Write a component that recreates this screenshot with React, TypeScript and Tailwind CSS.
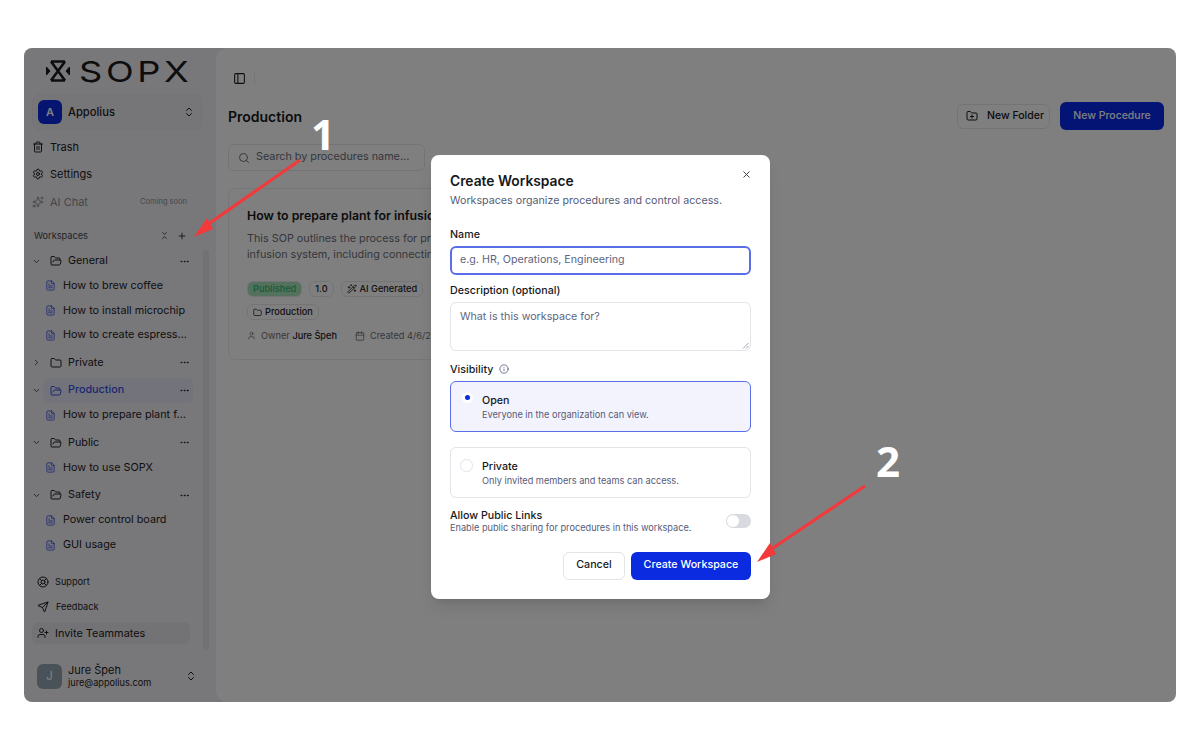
import {
  Calendar,
  ChevronDown,
  ChevronRight,
  ChevronsDownUp,
  ChevronsUpDown,
  Ellipsis,
  FileText,
  Folder,
  FolderOpen,
  FolderPlus,
  Info,
  LifeBuoy,
  PanelLeft,
  Plus,
  Search,
  Send,
  Settings,
  Sparkles,
  Trash2,
  User,
  UserPlus,
  WandSparkles,
  X,
} from "lucide-react";

const tree = [
  { name: "General", open: true, docs: ["How to brew coffee", "How to install microchip", "How to create espress..."] },
  { name: "Private", open: false, docs: [] },
  { name: "Production", open: true, active: true, docs: ["How to prepare plant f..."] },
  { name: "Public", open: true, docs: ["How to use SOPX"] },
  { name: "Safety", open: true, docs: ["Power control board", "GUI usage"] },
];

function Logo() {
  return (
    <div className="flex h-[46px] items-center gap-[9px] pl-[14px]">
      <svg width="24" height="22" viewBox="0 0 24 22" fill="none" stroke="#1b1b1d" strokeWidth="2.6" className="shrink-0">
        <path d="M5 1.5h14M5 20.5h14M5 1.5l14 19M19 1.5l-14 19" />
        <path d="M0.5 7l3.5 4-3.5 4zM23.5 7l-3.5 4 3.5 4z" fill="#1b1b1d" strokeWidth="1" />
      </svg>
      <span className="origin-left scale-x-[1.25] text-[29px] leading-none font-normal tracking-[0.1em] text-[#1b1b1d]">SOPX</span>
    </div>
  );
}

function Sidebar() {
  return (
    <aside className="flex w-[192px] shrink-0 flex-col pl-[8px] text-[#1f2024]">
      <Logo />
      <button className="flex h-[36px] w-[170px] items-center rounded-lg border border-[#e8e8ee] bg-[#ececf1] pr-[6px] pl-[5px]">
        <span className="flex h-[24px] w-[24px] items-center justify-center rounded-md bg-[#0a2be0] text-[11px] font-semibold text-white">A</span>
        <span className="ml-[6px] text-[11.2px] font-medium">Appolius</span>
        <ChevronsUpDown size={12} className="ml-auto" />
      </button>
      <nav className="mt-[3px] flex flex-col text-[11px]">
        <a className="flex h-[27.5px] items-center gap-[6px]"><Trash2 size={12} /> Trash</a>
        <a className="flex h-[27.5px] items-center gap-[6px]"><Settings size={12} /> Settings</a>
        <a className="flex h-[27.5px] items-center gap-[6px] text-[#8b8d96]">
          <Sparkles size={12} /> AI Chat
          <span className="mr-[29px] ml-auto text-[7.5px]">Coming soon</span>
        </a>
      </nav>
      <div className="mt-[10px] flex h-[20px] items-center pr-[29px] pl-[2px] text-[9.2px] text-[#44454c]">
        <span>Workspaces</span>
        <ChevronsDownUp size={9} className="mr-[8px] ml-auto text-[#1f2024]" />
        <Plus size={10} className="text-[#1f2024]" />
      </div>
      <div className="relative mt-[3px] flex w-[176px] flex-col gap-[2.6px] text-[10.8px]">
        {tree.map((f) => (
          <div key={f.name} className="flex flex-col">
            <div className="flex h-[25px] items-center">
              <span className="flex w-[9px] justify-center">
                {f.open ? <ChevronDown size={9} /> : <ChevronRight size={9} />}
              </span>
              <div className={`ml-[2px] flex h-[25px] w-[150px] items-center rounded-md pl-[7px] ${f.active ? "bg-[#e4e7f6] font-medium text-[#3a50e0]" : ""}`}>
                {f.open ? <FolderOpen size={12} /> : <Folder size={12} />}
                <span className="ml-[6px]">{f.name}</span>
                <Ellipsis size={11} className="mr-[3px] ml-auto text-[#1f2024]" />
              </div>
            </div>
            {f.docs.map((d) => (
              <div key={d} className="flex h-[24.8px] items-center gap-[7px] pl-[13px]">
                <FileText size={11} className="shrink-0 text-[#4a5fe8]" />
                <span className="whitespace-nowrap">{d}</span>
              </div>
            ))}
          </div>
        ))}
        <div className="absolute top-[1px] right-[-1px] h-[400px] w-[6px] rounded-full bg-[#e4e4ea]" />
      </div>
      <div className="mt-[12px] flex flex-col text-[9.2px]">
        <a className="flex h-[25px] items-center gap-[6px] pl-[5px]"><LifeBuoy size={12} /> Support</a>
        <a className="flex h-[25px] items-center gap-[7px] pl-[5px]"><Send size={12} /> Feedback</a>
        <a className="mt-[3px] flex h-[22px] w-[158px] items-center gap-[6px] rounded-md bg-[#e6e6ec] pl-[5px] text-[10.9px]"><UserPlus size={12} /> Invite Teammates</a>
      </div>
      <div className="mt-[19px] flex h-[26px] items-center pl-[5px]">
        <span className="flex h-[25px] w-[25px] items-center justify-center rounded-md bg-[#92a4b2] text-[12px] text-white">J</span>
        <div className="ml-[6px] flex flex-col leading-none">
          <span className="text-[11px]">Jure Špeh</span>
          <span className="mt-[2px] text-[9.2px]">jure@appolius.com</span>
        </div>
        <ChevronsUpDown size={12} className="mr-[19px] ml-auto" />
      </div>
    </aside>
  );
}

function Badge({ children, className = "" }: { children: React.ReactNode; className?: string }) {
  return (
    <span className={`flex h-[16px] items-center gap-[3px] rounded-md border border-[#e8e9ef] px-[5px] text-[9.2px] font-medium whitespace-nowrap text-[#1f2024] ${className}`}>
      {children}
    </span>
  );
}

function Main() {
  return (
    <main className="min-w-0 flex-1 rounded-l-xl bg-white pr-[12px] pl-[12px]">
      <div className="flex h-[54px] items-center pt-[6px]">
        <PanelLeft size={13} className="ml-[5px] text-[#1f2024]" />
        <span className="ml-[8px] h-[14px] w-px bg-[#ecedf2]" />
      </div>
      <div className="flex h-[28px] items-center justify-between">
        <h1 className="text-[14px] font-semibold text-[#17181b]">Production</h1>
        <div className="flex items-center gap-[10px]">
          <button className="flex h-[25px] w-[93px] items-center gap-[9px] rounded-md border border-[#e8e9ef] pl-[8px] text-[10.5px] font-medium text-[#17181b]">
            <FolderPlus size={12} /> New Folder
          </button>
          <button className="flex h-[28px] w-[104px] items-center justify-center rounded-md bg-[#0829e8] text-[10.5px] font-medium text-white">
            New Procedure
          </button>
        </div>
      </div>
      <div className="mt-[14px] flex h-[27px] w-[197px] items-center gap-[6px] rounded-md border border-[#e8e9ef] pl-[9px] text-[10.8px] text-[#6b6e78]">
        <Search size={12} /> Search by procedures name...
      </div>
      <div className="mt-[17px] h-[172px] w-[300px] overflow-hidden rounded-lg border border-[#ecedf2] pt-[19px] pl-[18px]">
        <h2 className="text-[12.3px] leading-[16px] font-semibold whitespace-nowrap text-[#17181b]">How to prepare plant for infusion system</h2>
        <p className="mt-[7px] text-[10.8px] leading-[15.5px] whitespace-nowrap text-[#6b6e78]">
          This SOP outlines the process for preparing the plant for the<br />
          infusion system, including connecting all components.
        </p>
        <div className="mt-[19px] flex gap-[7px]">
          <Badge className="border-[#a9e2bd] bg-[#a9e2bd] text-[#2fb866]">Published</Badge>
          <Badge>1.0</Badge>
          <Badge><WandSparkles size={10} /> AI Generated</Badge>
        </div>
        <div className="mt-[7px] flex">
          <Badge><Folder size={9} /> Production</Badge>
        </div>
        <div className="mt-[9px] flex items-center text-[9.2px] whitespace-nowrap text-[#6b6e78]">
          <User size={9} />
          <span className="ml-[5px]">Owner <b className="font-medium text-[#1f2024]">Jure Špeh</b></span>
          <Calendar size={10} className="ml-[18px]" />
          <span className="ml-[5px]">Created 4/6/2025</span>
        </div>
      </div>
    </main>
  );
}

function Dialog() {
  return (
    <div className="absolute top-[107px] left-[407px] flex h-[444px] w-[339px] flex-col rounded-lg bg-white px-[19px] pt-[18px] text-[#17181b] shadow-lg">
      <X size={11} className="absolute top-[14px] right-[18px] text-[#33343a]" />
      <h2 className="text-[13.8px] leading-[17px] font-semibold">Create Workspace</h2>
      <p className="mt-[4px] text-[10.7px] leading-[13px] text-[#565b78]">Workspaces organize procedures and control access.</p>
      <label className="mt-[20.5px] text-[10.7px] leading-[13px] font-medium">Name</label>
      <div className="mt-[5px] flex h-[29px] shrink-0 items-center rounded-md border-2 border-[#5a6ee8] pl-[8px] text-[10.7px] text-[#60657f]">
        e.g. HR, Operations, Engineering
      </div>
      <label className="mt-[9px] text-[10.7px] leading-[13px] font-medium">Description (optional)</label>
      <div className="relative mt-[5px] h-[49px] shrink-0 rounded-md border border-[#e3e4ea] pt-[7px] pl-[9px] text-[10.7px] leading-[14px] text-[#60657f]">
        What is this workspace for?
        <svg className="absolute right-[1px] bottom-[1px]" width="7" height="7" viewBox="0 0 7 7" stroke="#8a8b92" strokeWidth="0.8">
          <path d="M1 6.5L6.5 1M4 6.5L6.5 4" />
        </svg>
      </div>
      <div className="mt-[12px] flex items-center gap-[6px] text-[10.7px] leading-[13px] font-medium">
        Visibility <Info size={10} className="text-[#565b78]" />
      </div>
      <div className="mt-[5px] flex h-[51px] shrink-0 rounded-md border border-[#5a6ee8] bg-[#f2f3fd] pl-[11px]">
        <span className="mt-[10px] flex h-[11px] w-[11px] items-center justify-center rounded-full bg-white">
          <span className="h-[5px] w-[5px] rounded-full bg-[#0a2be0]" />
        </span>
        <div className="mt-[12px] ml-[9px]">
          <div className="text-[10.7px] leading-[14px] font-medium">Open</div>
          <div className="mt-[1px] text-[9.2px] leading-[12px] text-[#565b78]">Everyone in the organization can view.</div>
        </div>
      </div>
      <div className="mt-[15px] flex h-[51px] shrink-0 rounded-md border border-[#e3e4ea] pl-[9px]">
        <span className="mt-[11px] h-[13px] w-[13px] rounded-full border border-[#e3e4ea]" />
        <div className="mt-[12px] ml-[9px]">
          <div className="text-[10.7px] leading-[14px] font-medium">Private</div>
          <div className="mt-[1px] text-[9.2px] leading-[12px] text-[#565b78]">Only invited members and teams can access.</div>
        </div>
      </div>
      <div className="mt-[12px] flex items-center justify-between">
        <div>
          <div className="text-[10.7px] leading-[12px] font-medium">Allow Public Links</div>
          <div className="text-[9.2px] leading-[11px] text-[#565b78]">Enable public sharing for procedures in this workspace.</div>
        </div>
        <span className="flex h-[14px] w-[25px] items-center rounded-full bg-[#d9dae0] pl-[1px]">
          <span className="h-[12px] w-[12px] rounded-full bg-white" />
        </span>
      </div>
      <div className="mt-[19px] flex justify-end gap-[6px]">
        <button className="h-[28px] w-[62px] rounded-md border border-[#e3e4ea] text-[10.7px] font-medium">Cancel</button>
        <button className="h-[28px] w-[120px] rounded-md bg-[#0a2be0] text-[10.7px] font-medium text-white">Create Workspace</button>
      </div>
    </div>
  );
}

function Arrow({ className, x1, y1, x2, y2 }: { className: string; x1: number; y1: number; x2: number; y2: number }) {
  return (
    <svg className={className} width="120" height="90" viewBox="0 0 120 90" fill="none">
      <path d={`M${x1} ${y1}L${x2} ${y2}`} stroke="#f23a3c" strokeWidth="3.2" />
      <path d={`M${x2 - 10} ${y2 + 10}L${x2 + 3} ${y2 - 9}L${x2 + 9} ${y2 + 2}Z`} fill="#f23a3c" />
    </svg>
  );
}

export default function App() {
  return (
    <div className="relative h-[750px] w-[1200px] overflow-hidden bg-white px-[24px] pt-[48px] font-[Inter,sans-serif]">
      <div className="relative flex h-[654px] overflow-hidden rounded-lg bg-[#f0f0f4]">
        <Sidebar />
        <Main />
        <div className="absolute inset-0 bg-black/50" />
        <Dialog />
      </div>
      <Arrow className="absolute top-[153px] left-[190px]" x1={110} y1={7} x2={14} y2={74} />
      <Arrow className="absolute top-[480px] left-[752px]" x1={113} y1={6} x2={15} y2={72} />
      <span className="absolute top-[106px] left-[311px] font-['Open_Sans',sans-serif] text-[42px] leading-[56px] font-bold text-white">1</span>
      <span className="absolute top-[433px] left-[876px] font-['Open_Sans',sans-serif] text-[42px] leading-[56px] font-bold text-white">2</span>
    </div>
  );
}
